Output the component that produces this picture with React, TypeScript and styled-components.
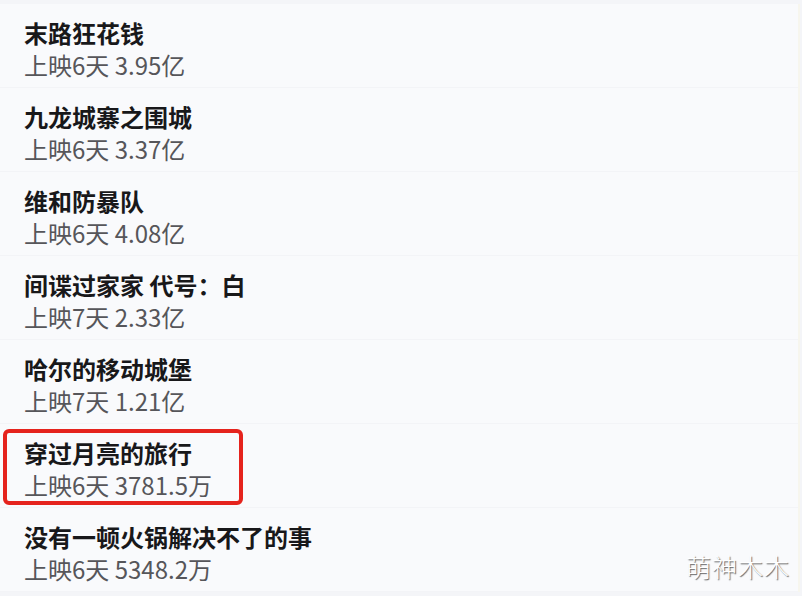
import styled, { createGlobalStyle } from "styled-components";

const GlobalStyle = createGlobalStyle`
  html, body {
    margin: 0;
    padding: 0;
    background: #f4f5f8;
  }
  body {
    font-family: "Noto Sans CJK SC", "Noto Sans", sans-serif;
  }
`;

type Movie = { title: string; days: number; gross: string; highlight?: boolean };

const movies: Movie[] = [
  { title: "末路狂花钱", days: 6, gross: "3.95亿" },
  { title: "九龙城寨之围城", days: 6, gross: "3.37亿" },
  { title: "维和防暴队", days: 6, gross: "4.08亿" },
  { title: "间谍过家家 代号：白", days: 7, gross: "2.33亿" },
  { title: "哈尔的移动城堡", days: 7, gross: "1.21亿" },
  { title: "穿过月亮的旅行", days: 6, gross: "3781.5万", highlight: true },
  { title: "没有一顿火锅解决不了的事", days: 6, gross: "5348.2万" },
];

export default function App() {
  return (
    <>
      <GlobalStyle />
      <Page>
        <List>
          {movies.map((m) => (
            <Row key={m.title}>
              <Block $highlight={m.highlight}>
                <Title>{m.title}</Title>
                <Sub>
                  上映{m.days}天 {m.gross}
                </Sub>
              </Block>
            </Row>
          ))}
        </List>
        <Watermark>萌神木木</Watermark>
      </Page>
    </>
  );
}

const Page = styled.div`
  position: relative;
  width: 802px;
  height: 596px;
  overflow: hidden;
  padding-top: 4px;
  box-sizing: border-box;
  background: #f4f5f8;
`;

const List = styled.div`
  display: flex;
  flex-direction: column;
  border-right: 2px solid #f7f6ee;
  margin-right: 2px;
`;

const Row = styled.div`
  height: 84px;
  box-sizing: border-box;
  background: #f9fafc;
  border-bottom: 1px solid #f3f4f7;
`;

const Block = styled.div<{ $highlight?: boolean }>`
  display: flex;
  flex-direction: column;
  width: 240px;
  box-sizing: border-box;
  margin: 5px 0 0 3px;
  padding: 4px 0 0 17px;
  border: 4px solid ${(p) => (p.$highlight ? "#e5231d" : "transparent")};
  border-radius: 6px;
  white-space: nowrap;
  overflow: visible;
`;

const Title = styled.div`
  font-size: 24px;
  line-height: 32px;
  font-weight: 700;
  color: #18181a;
`;

const Sub = styled.div`
  font-size: 24px;
  line-height: 32px;
  font-weight: 400;
  color: #56565a;
`;

const Watermark = styled.div`
  position: absolute;
  right: 12px;
  bottom: 15px;
  font-size: 25px;
  line-height: 30px;
  font-weight: 300;
  color: #ffffff;
  letter-spacing: 1px;
  text-shadow: 1px 1px 1px rgba(60, 60, 60, 0.8);
`;
